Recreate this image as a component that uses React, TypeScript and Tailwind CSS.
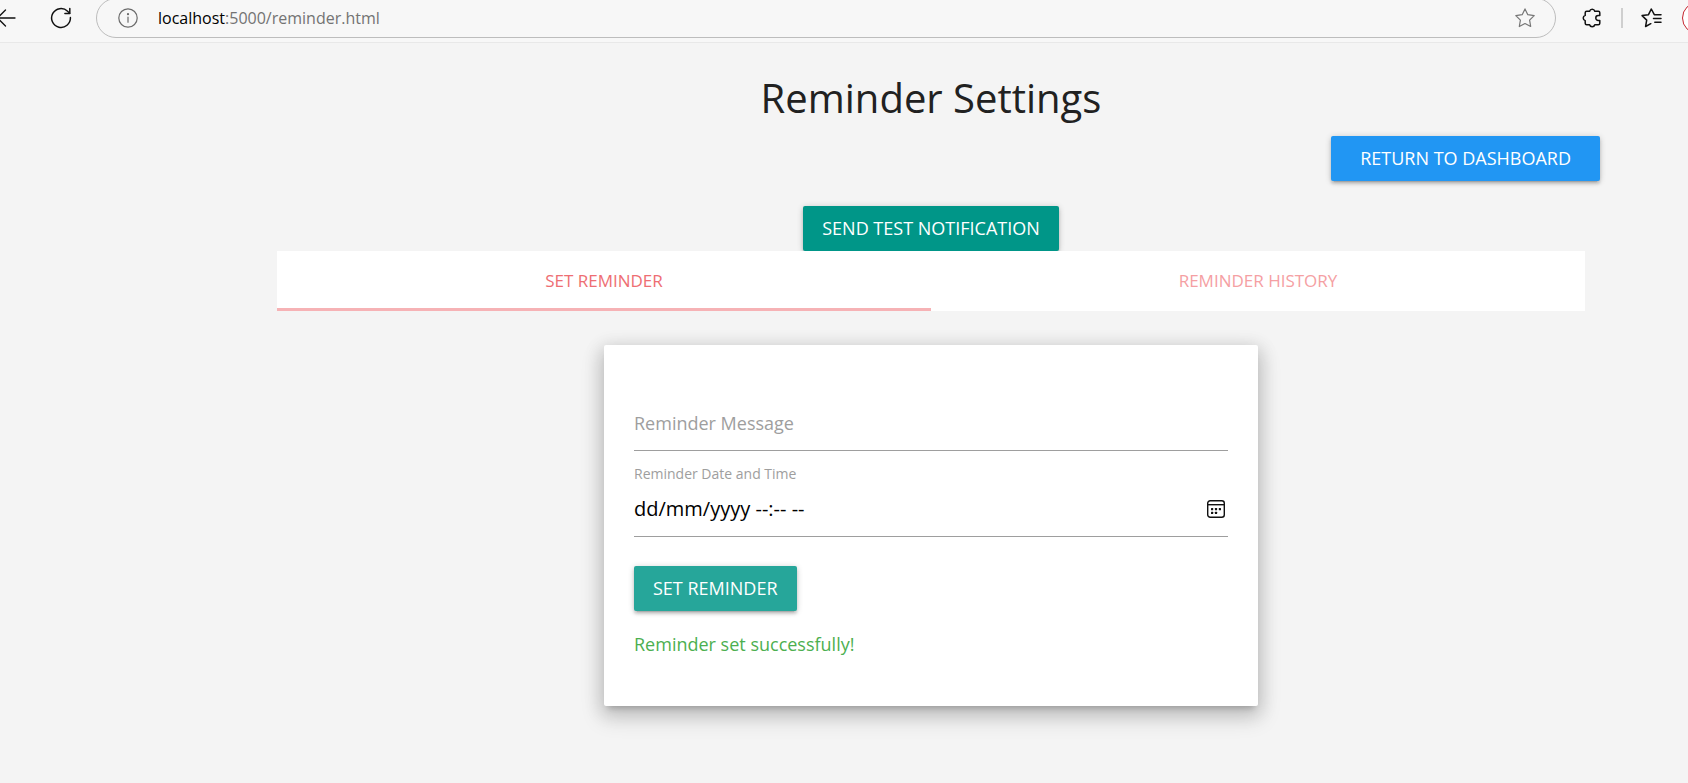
import { useState } from "react";

type IconProps = { className?: string };

function BackIcon({ className }: IconProps) {
  return (
    <svg className={className} viewBox="0 0 20 20" fill="none" stroke="#111" strokeWidth="1.3" strokeLinecap="round" strokeLinejoin="round" aria-hidden="true">
      <path d="M19 10H2M9.5 2 1.5 10l8 8" />
    </svg>
  );
}

function ReloadIcon({ className }: IconProps) {
  return (
    <svg className={className} viewBox="0 0 22 22" fill="none" stroke="#111" strokeWidth="1.5" strokeLinecap="round" strokeLinejoin="round" aria-hidden="true">
      <path d="M20.4 10.6A9.4 9.4 0 1 1 17.6 4.3L19.6 6.2" />
      <path d="M19.8 1.6v4.8h-4.9" />
    </svg>
  );
}

function InfoIcon({ className }: IconProps) {
  return (
    <svg className={className} viewBox="0 0 20 20" fill="none" stroke="#6b6b6b" strokeWidth="1.2" strokeLinecap="round" aria-hidden="true">
      <circle cx="10" cy="10" r="9.2" />
      <path d="M10 9v5.2" />
      <circle cx="10" cy="6.2" r="0.5" fill="#6b6b6b" />
    </svg>
  );
}

function StarIcon({ className }: IconProps) {
  return (
    <svg className={className} viewBox="0 0 20 20" fill="none" stroke="#767676" strokeWidth="1.2" strokeLinejoin="round" aria-hidden="true">
      <path d="M10 .9l2.8 5.8 6.4.9-4.6 4.5 1.1 6.4L10 15.5l-5.7 3 1.1-6.4L.8 7.6l6.4-.9z" />
    </svg>
  );
}

function PuzzleIcon({ className }: IconProps) {
  return (
    <svg className={className} viewBox="0 0 20 20" fill="none" stroke="#111" strokeWidth="1.5" strokeLinejoin="round" aria-hidden="true">
      <path d="M3.2 4.7c0-.9.6-1.500 1.500-1.500h2.900a2.700 2.700 0 0 1 5.200 0h3.500c.9 0 1.500.6 1.500 1.500v2.900h-1.600a2.400 2.400 0 0 0 0 4.800h1.600v2.900c0 .9-.6 1.500-1.500 1.500h-3.500a2.700 2.700 0 0 1-5.200 0H4.700c-.9 0-1.500-.6-1.500-1.500v-2.700a2.700 2.700 0 0 1 0-5.200z" />
    </svg>
  );
}

function FavoritesIcon({ className }: IconProps) {
  return (
    <svg className={className} viewBox="0 0 22 20" fill="none" stroke="#111" strokeWidth="1.5" strokeLinecap="round" strokeLinejoin="round" aria-hidden="true">
      <path d="M20 6.7h-6.7L10.3 1 7.5 6.7l-6.4.9 4.6 4.5-1.1 6.4 5.2-2.8" />
      <path d="M12.5 10.4H20M13.8 14.2H20" />
    </svg>
  );
}

function CalendarIcon({ className }: IconProps) {
  return (
    <svg className={className} viewBox="0 0 18 18" fill="none" stroke="#111" strokeWidth="1.4" aria-hidden="true">
      <rect x="0.7" y="0.7" width="16.6" height="16.6" rx="2.5" />
      <path d="M1 4.7h16" />
      <g fill="#111" stroke="none">
        <rect x="4" y="8" width="2.2" height="2.2" rx="0.5" />
        <rect x="7.9" y="8" width="2.2" height="2.2" rx="0.5" />
        <rect x="11.8" y="8" width="2.2" height="2.2" rx="0.5" />
        <rect x="4" y="11.8" width="2.2" height="2.2" rx="0.5" />
        <rect x="7.9" y="11.8" width="2.2" height="2.2" rx="0.5" />
      </g>
    </svg>
  );
}

function BrowserBar() {
  return (
    <header className="flex h-[43px] items-start overflow-hidden border-b border-[#e8e8e8] bg-[#f7f7f7]">
      <div className="flex h-9 w-24 shrink-0 items-center gap-[34px]">
        <button type="button" aria-label="Back" className="-ml-1">
          <BackIcon className="h-5 w-5" />
        </button>
        <button type="button" aria-label="Reload">
          <ReloadIcon className="h-[22px] w-[22px]" />
        </button>
      </div>
      <div className="-mt-0.5 flex h-10 min-w-0 flex-1 items-center rounded-full border border-[#bdbdbd] pr-5 pl-[21px]">
        <InfoIcon className="h-5 w-5 shrink-0" />
        <p className="ml-5 flex-1 text-[16px] text-[#737373]">
          <span className="text-black">localhost</span>:5000/reminder.html
        </p>
        <button type="button" aria-label="Add to favorites">
          <StarIcon className="h-5 w-5" />
        </button>
      </div>
      <div className="flex h-9 w-[132px] shrink-0 items-center pl-[26px]">
        <button type="button" aria-label="Extensions">
          <PuzzleIcon className="h-5 w-5" />
        </button>
        <span className="ml-[19px] h-5 w-0.5 shrink-0 bg-[#cfcfcf]" />
        <button type="button" aria-label="Favorites" className="ml-[18px] shrink-0">
          <FavoritesIcon className="h-5 w-[22px]" />
        </button>
        <button type="button" aria-label="Profile" className="ml-[19px] h-8 w-8 shrink-0 rounded-full border border-[#c4262e] bg-white" />
      </div>
    </header>
  );
}

const buttonBase =
  "h-[45px] rounded-xs text-[18px] text-white uppercase shadow-[0_3px_3px_0_rgba(0,0,0,0.14),0_4px_1px_-3px_rgba(0,0,0,0.12),0_1px_6px_0_rgba(0,0,0,0.2)]";

const tabBase =
  "border-b-3 border-transparent pt-0.5 uppercase aria-selected:border-[#f6b2b5]";

export default function App() {
  const [tab, setTab] = useState<"set" | "history">("set");
  const [message, setMessage] = useState("");
  const [date, setDate] = useState("");

  return (
    <div className="min-h-screen bg-[#f4f4f4] font-['Open_Sans','Noto_Sans',sans-serif] text-[#212121]">
      <BrowserBar />
      <main className="pt-[26px] pr-[103px] pb-[77px] pl-[277px]">
        <h1 className="text-center text-[40px] leading-[57px]">Reminder Settings</h1>
        <div className="-mr-[15px] flex justify-end pt-[10px]">
          <button type="button" className={`${buttonBase} bg-[#2196f3] px-[29px]`}>
            Return to Dashboard
          </button>
        </div>
        <div className="flex justify-center pt-[25px]">
          <button type="button" className={`${buttonBase} bg-[#009688] px-[19px]`}>
            Send Test Notification
          </button>
        </div>
        <div role="tablist" className="relative grid h-[60px] grid-cols-2 bg-white text-[17px]">
          <button
            type="button"
            role="tab"
            aria-selected={tab === "set"}
            onClick={() => setTab("set")}
            className={`${tabBase} text-[#ee6e73]`}
          >
            Set Reminder
          </button>
          <button
            type="button"
            role="tab"
            aria-selected={tab === "history"}
            onClick={() => setTab("history")}
            className={`${tabBase} text-[#f5a0a3]`}
          >
            Reminder History
          </button>
        </div>
        <form
          onSubmit={(e) => e.preventDefault()}
          className="mx-auto mt-[34px] w-1/2 rounded-xs bg-white px-[30px] pt-[57px] pb-[48px] shadow-[0_10px_21px_3px_rgba(0,0,0,0.14),0_4px_18px_3px_rgba(0,0,0,0.12),0_6px_6px_-4px_rgba(0,0,0,0.2)]"
        >
          <div className="relative">
            <input
              id="message"
              type="text"
              value={message}
              onChange={(e) => setMessage(e.target.value)}
              className="block h-[49px] w-full border-b border-[#9e9e9e] text-[18px] outline-none"
            />
            {message === "" && (
              <label htmlFor="message" className="absolute top-2 left-0 text-[18px] leading-[26px] text-[#9e9e9e]">
                Reminder Message
              </label>
            )}
          </div>
          <label htmlFor="date" className="mt-3 block text-[14px] leading-[22px] text-[#9e9e9e]">
            Reminder Date and Time
          </label>
          <div className="flex h-[52px] items-center border-b border-[#9e9e9e] pr-[3px] pb-1">
            <input
              id="date"
              type="text"
              placeholder="dd/mm/yyyy --:-- --"
              value={date}
              onChange={(e) => setDate(e.target.value)}
              className="min-w-0 flex-1 text-[20px] text-black outline-none placeholder:text-black"
            />
            <button type="button" aria-label="Open calendar">
              <CalendarIcon className="h-[18px] w-[18px]" />
            </button>
          </div>
          <button type="submit" className={`${buttonBase} mt-[29px] bg-[#26a69a] px-[19px]`}>
            Set Reminder
          </button>
          <p role="status" className="mt-5 text-[18px] leading-[27px] text-[#4caf50]">
            Reminder set successfully!
          </p>
        </form>
      </main>
    </div>
  );
}
